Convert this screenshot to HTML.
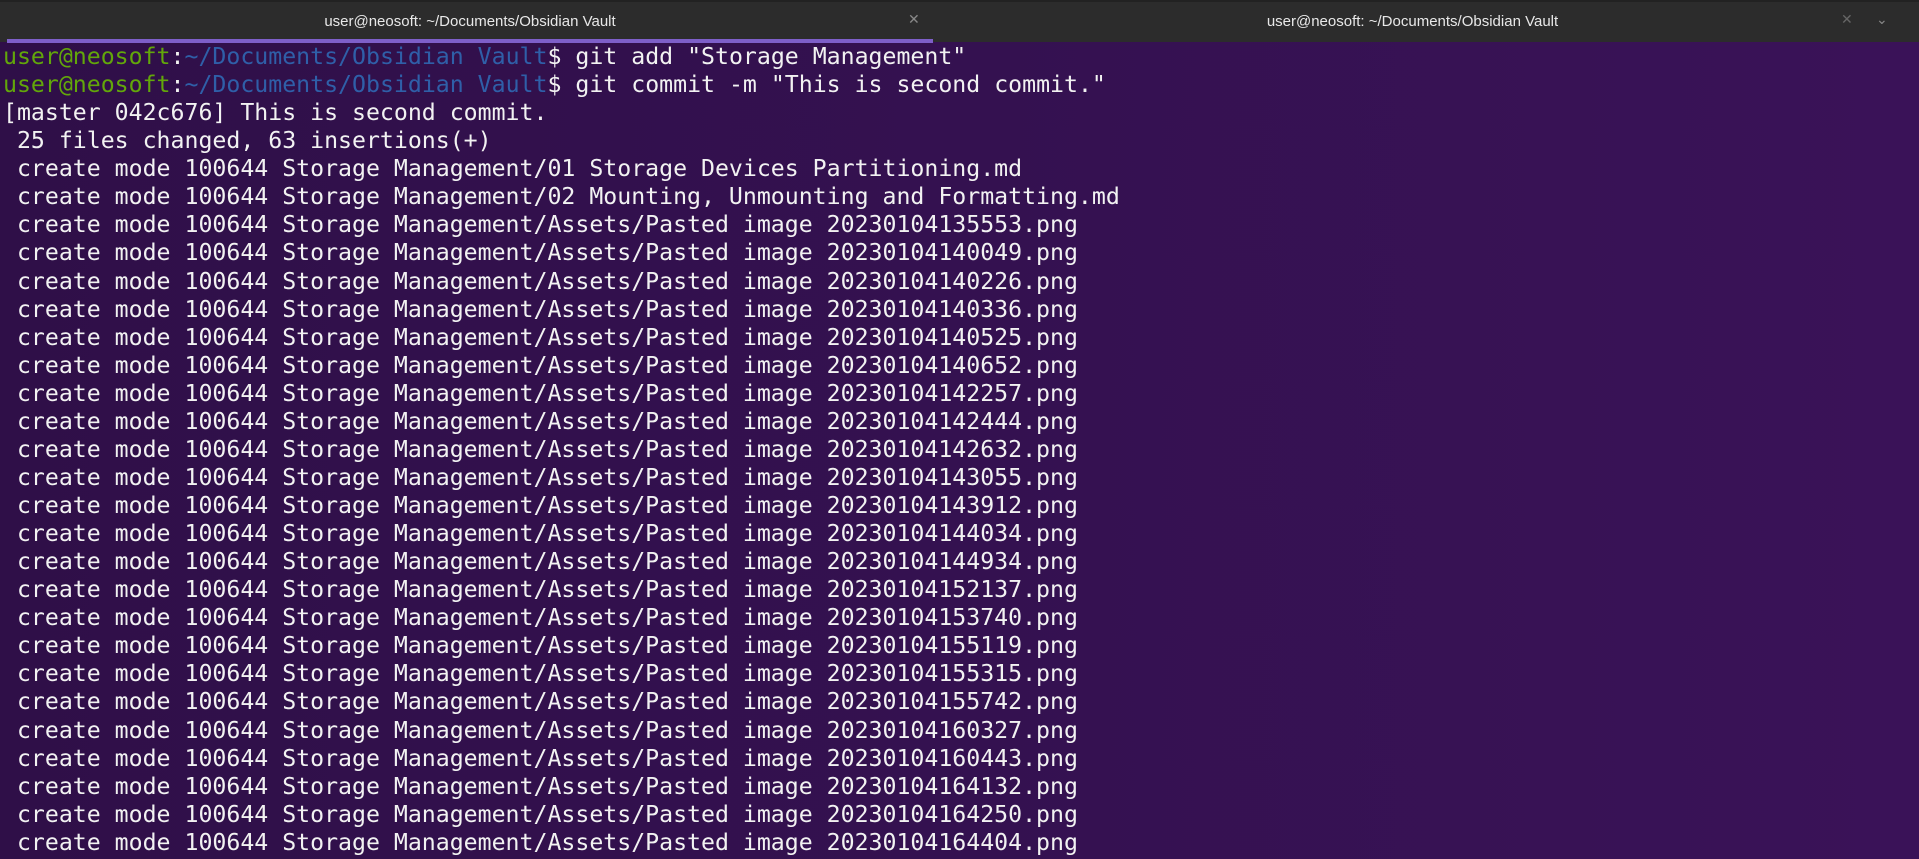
<!DOCTYPE html>
<html><head><meta charset="utf-8"><style>
html,body{margin:0;padding:0;width:1919px;height:859px;overflow:hidden;background:#331150}
.bar{position:absolute;left:0;top:0;width:1919px;height:42px;background:#2c2c2c;border-top:2px solid #222;box-sizing:border-box}
.tab{position:absolute;top:0;height:40px;line-height:40px;font-family:"Liberation Sans",sans-serif;font-size:15px;color:#e8e8e8;text-align:center}
.ul{position:absolute;left:7px;top:39px;width:926px;height:4px;background:#7e5fc9;z-index:5}
.x{position:absolute;top:10px;color:#888;font-family:"DejaVu Sans",sans-serif;font-size:14px}
.term{position:absolute;left:0;top:42px;width:1919px;height:817px;background:linear-gradient(90deg,#2f0f48 0%,#341150 50%,#3a1258 100%)}
pre{position:absolute;left:3px;top:43px;margin:0;font-family:"DejaVu Sans Mono","Liberation Mono",monospace;font-size:23.2px;line-height:28.07px;color:#f2f2f2}
.g{color:#62a70a;font-weight:normal}.b{color:#2f5fa8}
</style></head><body>
<div class="bar">
<div class="tab" style="left:0;width:940px">user@neosoft: ~/Documents/Obsidian Vault</div>
<div class="x" style="left:908px">✕</div>
<div class="tab" style="left:940px;width:945px">user@neosoft: ~/Documents/Obsidian Vault</div>
<div class="x" style="left:1841px;color:#666">✕</div>
<div class="x" style="left:1876px">⌄</div>
</div>
<div class="term"></div>
<div class="ul"></div>
<pre><span class="g">user@neosoft</span>:<span class="b">~/Documents/Obsidian Vault</span>$ git add "Storage Management"
<span class="g">user@neosoft</span>:<span class="b">~/Documents/Obsidian Vault</span>$ git commit -m "This is second commit."
[master 042c676] This is second commit.
 25 files changed, 63 insertions(+)
 create mode 100644 Storage Management/01 Storage Devices Partitioning.md
 create mode 100644 Storage Management/02 Mounting, Unmounting and Formatting.md
 create mode 100644 Storage Management/Assets/Pasted image 20230104135553.png
 create mode 100644 Storage Management/Assets/Pasted image 20230104140049.png
 create mode 100644 Storage Management/Assets/Pasted image 20230104140226.png
 create mode 100644 Storage Management/Assets/Pasted image 20230104140336.png
 create mode 100644 Storage Management/Assets/Pasted image 20230104140525.png
 create mode 100644 Storage Management/Assets/Pasted image 20230104140652.png
 create mode 100644 Storage Management/Assets/Pasted image 20230104142257.png
 create mode 100644 Storage Management/Assets/Pasted image 20230104142444.png
 create mode 100644 Storage Management/Assets/Pasted image 20230104142632.png
 create mode 100644 Storage Management/Assets/Pasted image 20230104143055.png
 create mode 100644 Storage Management/Assets/Pasted image 20230104143912.png
 create mode 100644 Storage Management/Assets/Pasted image 20230104144034.png
 create mode 100644 Storage Management/Assets/Pasted image 20230104144934.png
 create mode 100644 Storage Management/Assets/Pasted image 20230104152137.png
 create mode 100644 Storage Management/Assets/Pasted image 20230104153740.png
 create mode 100644 Storage Management/Assets/Pasted image 20230104155119.png
 create mode 100644 Storage Management/Assets/Pasted image 20230104155315.png
 create mode 100644 Storage Management/Assets/Pasted image 20230104155742.png
 create mode 100644 Storage Management/Assets/Pasted image 20230104160327.png
 create mode 100644 Storage Management/Assets/Pasted image 20230104160443.png
 create mode 100644 Storage Management/Assets/Pasted image 20230104164132.png
 create mode 100644 Storage Management/Assets/Pasted image 20230104164250.png
 create mode 100644 Storage Management/Assets/Pasted image 20230104164404.png</pre>
</body></html>
